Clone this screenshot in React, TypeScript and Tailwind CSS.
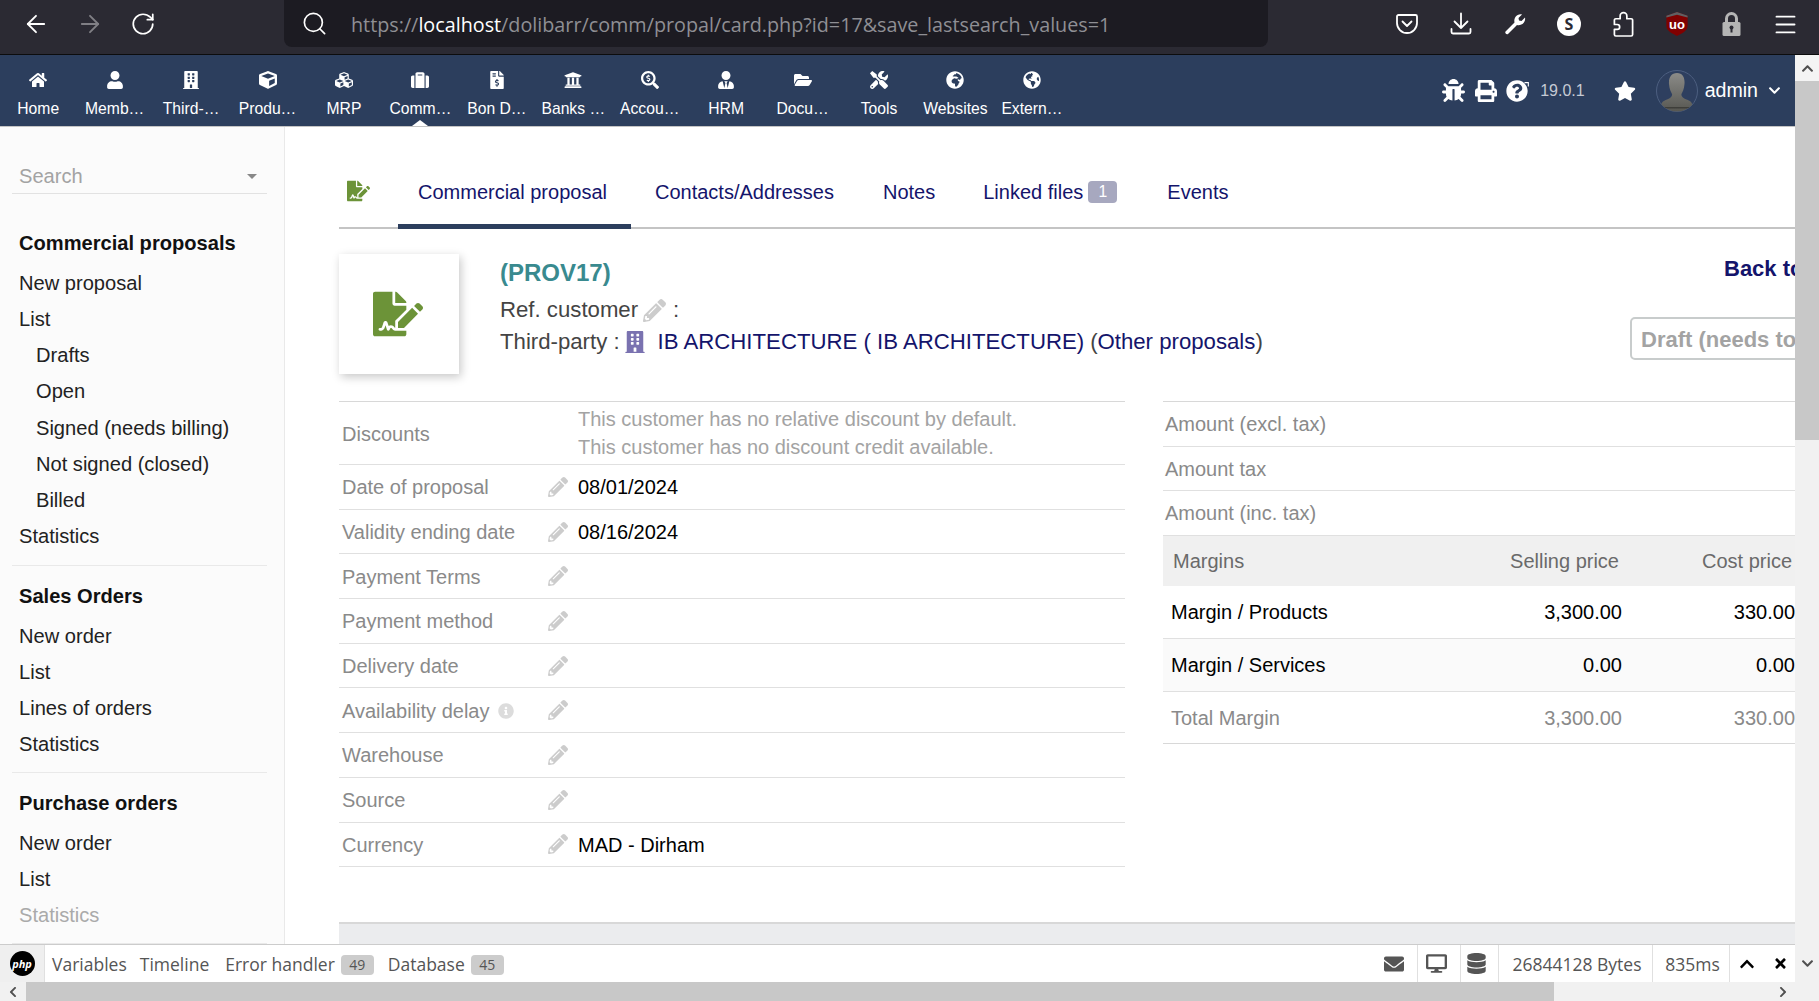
import { ArrowLeft, ArrowRight, RotateCw, Search, Menu } from "lucide-react";
import {
  FaBug,
  FaBuilding,
  FaChevronDown,
  FaChevronLeft,
  FaChevronRight,
  FaChevronUp,
  FaCube,
  FaCubes,
  FaDatabase,
  FaDesktop,
  FaEnvelope,
  FaFileInvoiceDollar,
  FaFileSignature,
  FaFolderOpen,
  FaGlobeAfrica,
  FaGlobeAmericas,
  FaHome,
  FaInfoCircle,
  FaPencilAlt,
  FaPrint,
  FaQuestionCircle,
  FaSearchDollar,
  FaStar,
  FaSuitcase,
  FaTimes,
  FaTools,
  FaUniversity,
  FaUser,
  FaUserTie,
} from "react-icons/fa";

const NAV = [
  { label: "Home", icon: FaHome },
  { label: "Memb…", icon: FaUser },
  { label: "Third-…", icon: FaBuilding },
  { label: "Produ…", icon: FaCube },
  { label: "MRP", icon: FaCubes },
  { label: "Comm…", icon: FaSuitcase, active: true },
  { label: "Bon D…", icon: FaFileInvoiceDollar },
  { label: "Banks …", icon: FaUniversity },
  { label: "Accou…", icon: FaSearchDollar },
  { label: "HRM", icon: FaUserTie },
  { label: "Docu…", icon: FaFolderOpen },
  { label: "Tools", icon: FaTools },
  { label: "Websites", icon: FaGlobeAfrica },
  { label: "Extern…", icon: FaGlobeAmericas },
];

const MENU = [
  {
    title: "Commercial proposals",
    items: [
      { label: "New proposal" },
      { label: "List" },
      { label: "Drafts", sub: true },
      { label: "Open", sub: true },
      { label: "Signed (needs billing)", sub: true },
      { label: "Not signed (closed)", sub: true },
      { label: "Billed", sub: true },
      { label: "Statistics" },
    ],
  },
  {
    title: "Sales Orders",
    items: [{ label: "New order" }, { label: "List" }, { label: "Lines of orders" }, { label: "Statistics" }],
  },
  {
    title: "Purchase orders",
    items: [{ label: "New order" }, { label: "List" }, { label: "Statistics", muted: true }],
  },
];

const FIELDS = [
  { label: "Date of proposal", value: "08/01/2024" },
  { label: "Validity ending date", value: "08/16/2024" },
  { label: "Payment Terms" },
  { label: "Payment method" },
  { label: "Delivery date" },
  { label: "Availability delay", info: true },
  { label: "Warehouse" },
  { label: "Source" },
  { label: "Currency", value: "MAD - Dirham" },
];

function PocketIcon() {
  return (
    <svg viewBox="0 0 24 24" className="size-[24px]" fill="none" stroke="white" strokeWidth="1.8">
      <path d="M3.5 3h17a1.5 1.5 0 0 1 1.5 1.5V11c0 5.5-4.5 10-10 10S2 16.5 2 11V4.5A1.5 1.5 0 0 1 3.5 3z" />
      <path d="M7.5 9.5 12 14l4.5-4.5" strokeLinecap="round" strokeLinejoin="round" />
    </svg>
  );
}

function DownloadIcon() {
  return (
    <svg viewBox="0 0 24 24" className="size-[24px]" fill="none" stroke="white" strokeWidth="1.8" strokeLinecap="round" strokeLinejoin="round">
      <path d="M12 1.5v14.5M5.5 9.5 12 16l6.5-6.5" />
      <path d="M2.5 17v3a1.5 1.5 0 0 0 1.5 1.5h16a1.5 1.5 0 0 0 1.5-1.5v-3" />
    </svg>
  );
}

function WrenchIcon() {
  return (
    <svg viewBox="0 0 24 24" className="size-[24px]" fill="white">
      <path d="M2.5 19.5 11.5 10.5C10.5 6 14 1.5 19 2.5L15.5 6 16 8.5 18.5 9 22 5.5C23 10.5 18.5 14 14 13L5 22C3.5 23 1.5 21 2.5 19.5Z" />
    </svg>
  );
}

function PuzzleIcon() {
  return (
    <svg viewBox="0 0 24 28" className="h-[27px] w-[23px]" fill="none" stroke="white" strokeWidth="1.8" strokeLinejoin="round">
      <path d="M4 26h16a1.5 1.5 0 0 0 1.5-1.5V9.5A1.5 1.5 0 0 0 20 8h-4.5V5a3.5 3.5 0 0 0-7 0v3H4a1.5 1.5 0 0 0-1.5 1.5V14h3a2.5 2.5 0 0 1 0 5h-3v5.5A1.5 1.5 0 0 0 4 26z" />
    </svg>
  );
}

function LockIcon() {
  return (
    <svg viewBox="0 0 19 24" className="h-[24px] w-[19px]">
      <path d="M4.5 11V6.5a5 5 0 0 1 10 0V11" fill="none" stroke="#b5b5b5" strokeWidth="3" />
      <rect x="0.5" y="10" width="18" height="14" rx="1.5" fill="#b5b5b5" />
      <circle cx="9.5" cy="15.5" r="2" fill="#2b2a33" />
      <rect x="8.5" y="16" width="2" height="4.5" fill="#2b2a33" />
    </svg>
  );
}

function UblockIcon() {
  return (
    <span className="relative flex h-[24px] w-[22px] items-center justify-center">
      <svg viewBox="0 0 23 26" className="absolute inset-0 size-full">
        <path d="M11.5 0 23 4v11c0 5-5 8-11.5 11C5 23 0 20 0 15V4z" fill="#800000" />
        <path d="M11.5 0 23 4v2L11.5 3 0 6V4z" fill="#5f6063" />
      </svg>
      <span className="relative text-[13px] leading-none font-bold text-white">uo</span>
    </span>
  );
}

function Avatar() {
  return (
    <svg viewBox="0 0 42 42" className="size-[42px] shrink-0">
      <defs>
        <linearGradient id="bust" x1="0" y1="0" x2="0" y2="1">
          <stop offset="0" stopColor="#8b8b88" />
          <stop offset="1" stopColor="#565650" />
        </linearGradient>
        <clipPath id="round">
          <circle cx="21" cy="21" r="20.5" />
        </clipPath>
      </defs>
      <circle cx="21" cy="21" r="20.5" fill="#2e3f5f" stroke="#4d5f80" />
      <g clipPath="url(#round)">
        <path d="M21 3c6 0 8 5 7.5 11-.4 5-2 8-3 10-.5 2 1 4 5 5.5 4 1.5 6 3 6 7v6H5v-6c0-4 2-5.5 6-7 4-1.5 5.5-3.5 5-5.5-1-2-2.6-5-3-10C12.5 8 15 3 21 3z" fill="url(#bust)" />
        <rect x="5" y="37" width="32" height="1.5" fill="#3e3e3a" />
      </g>
    </svg>
  );
}

function Toolbar() {
  return (
    <div className="flex h-[55px] shrink-0 border-b border-[#0c0c0d] bg-[#2b2a33]">
      <div className="flex h-[48px] w-[284px] shrink-0 items-center gap-[26px] pl-[22px] text-white">
        <ArrowLeft size={28} strokeWidth={1.6} />
        <ArrowRight size={28} strokeWidth={1.6} className="opacity-40" />
        <RotateCw size={26} strokeWidth={1.6} />
      </div>
      <div className="flex h-[47px] w-[984px] shrink-0 items-center gap-[23px] rounded-b-lg bg-[#1c1b22] pl-[17px] font-[Open_Sans,sans-serif] text-[19.75px] whitespace-nowrap text-[#8f8f94]">
        <Search size={27} strokeWidth={1.5} className="text-white" />
        <span className="pt-[2px]">
          https://<span className="text-white">localhost</span>/dolibarr/comm/propal/card.php?id=17&amp;save_lastsearch_values=1
        </span>
      </div>
      <div className="ml-auto flex h-[48px] items-center pr-[7px] text-white">
        <div className="flex w-[54px] justify-center"><PocketIcon /></div>
        <div className="flex w-[54px] justify-center"><DownloadIcon /></div>
        <div className="flex w-[54px] justify-center"><WrenchIcon /></div>
        <div className="flex w-[54px] justify-center">
          <span className="flex size-[24px] items-center justify-center rounded-full bg-white font-[Open_Sans,sans-serif] text-[16px] font-bold text-[#2b2a33]">S</span>
        </div>
        <div className="flex w-[54px] justify-center"><PuzzleIcon /></div>
        <div className="flex w-[54px] justify-center"><UblockIcon /></div>
        <div className="flex w-[54px] justify-center"><LockIcon /></div>
        <div className="flex w-[54px] justify-center"><Menu size={27} strokeWidth={1.7} /></div>
      </div>
    </div>
  );
}

function TopNav() {
  return (
    <div className="flex h-[72px] shrink-0 border-b border-[#c4c4c4] bg-[#2c3e5d] text-white">
      {NAV.map(({ label, icon: Icon, active }) => (
        <div key={label} className="relative flex w-[76.45px] shrink-0 flex-col items-center pt-[16px]">
          <Icon size={18} />
          <span className="mt-[10px] text-[15.7px] leading-[20px] whitespace-nowrap">{label}</span>
          {active && (
            <span className="absolute bottom-0 left-1/2 h-0 w-0 -translate-x-1/2 border-x-[8px] border-b-[6px] border-x-transparent border-b-white" />
          )}
        </div>
      ))}
      <div className="ml-auto flex items-center pr-[14px]">
        <FaBug size={23} />
        <FaPrint size={22} className="ml-[10px]" />
        <span className="relative ml-[9px] flex w-[25px]">
          <FaQuestionCircle size={22} />
          <FaChevronUp size={7} className="absolute top-0 right-0 rotate-45" />
        </span>
        <span className="ml-[9px] text-[16px] text-[#c5cad4]">19.0.1</span>
        <FaStar size={22} className="ml-[29px]" />
        <span className="ml-[20px]"><Avatar /></span>
        <span className="ml-[7px] text-[19.6px]">admin</span>
        <FaChevronDown size={13} className="ml-[10px]" />
      </div>
    </div>
  );
}

function Sidebar() {
  return (
    <aside className="w-[285px] shrink-0 overflow-hidden border-r border-[#e9e9e9] bg-[#fbfbfb] pt-[31px] pr-[17px] pl-[12px] text-[20.1px] text-[#222]">
      <div className="flex h-[36px] items-center justify-between border-b border-[#e2e2e2] pt-[2px] pr-[10px] pl-[7px] text-[#a3a3a3]">
        <span>Search</span>
        <span className="h-0 w-0 border-x-[5px] border-t-[5px] border-x-transparent border-t-[#888]" />
      </div>
      {MENU.map((group, i) => (
        <div key={group.title} className={i === 0 ? "border-b border-[#e9e9e9] pt-[31px] pb-[11px]" : "border-b border-[#e9e9e9] pt-[12px] pb-[10px]"}>
          <div className="mb-[3px] flex h-[36px] items-center pt-[1px] pl-[7px] font-bold text-[#111]">{group.title}</div>
          {group.items.map((item) => (
            <div
              key={item.label}
              className={`flex h-[36.25px] items-center pt-[1px] whitespace-nowrap ${item.sub ? "pl-[24px]" : "pl-[7px]"} ${item.muted ? "text-[#aaaaaa]" : ""}`}
            >
              {item.label}
            </div>
          ))}
        </div>
      ))}
    </aside>
  );
}

function Tabs() {
  return (
    <div className="mt-[28px] flex h-[74px] shrink-0 border-b-2 border-[#c4c4c4] text-[#14146b]">
      <FaFileSignature size={22} className="mt-[25px] ml-[8px] w-[23px] text-[#6c9338]" />
      <div className="ml-[28px] flex h-[74px] w-[233px] items-center border-b-[5px] border-[#2c3e5d] pt-[4px] pl-[20px]">Commercial proposal</div>
      <div className="ml-[24px] flex items-center pt-[2px]">Contacts/Addresses</div>
      <div className="ml-[49px] flex items-center pt-[2px]">Notes</div>
      <div className="ml-[48px] flex items-center gap-[5px] pt-[2px]">
        Linked files
        <span className="flex h-[22px] w-[29px] items-center justify-center rounded-[4px] bg-[#a7a8bf] text-[15.7px] text-white">1</span>
      </div>
      <div className="ml-[50px] flex items-center pt-[2px]">Events</div>
    </div>
  );
}

function Header() {
  return (
    <div className="mt-[25px] flex shrink-0">
      <div className="flex h-[120px] w-[120px] shrink-0 items-center justify-center bg-white text-[#6c9338] shadow-[2px_3px_9px_rgba(0,0,0,0.22)]">
        <FaFileSignature size={50} className="ml-[-2px]" />
      </div>
      <div className="ml-[41px] min-w-0 flex-1 text-[22.2px] whitespace-nowrap text-[#444]">
        <div className="pt-[4px] text-[24px] leading-[30px] font-bold text-[#398a8f]">(PROV17)</div>
        <div className="mt-[6px] flex h-[32px] items-center">
          Ref. customer
          <FaPencilAlt size={23} className="mr-[7px] ml-[5px] text-[#cccccc]" />
          :
        </div>
        <div className="flex h-[32px] items-center">
          Third-party :
          <FaBuilding size={22} className="mr-[12px] ml-[4px] text-[#7a72b0]" />
          <span className="text-[#14146b]">IB ARCHITECTURE ( IB ARCHITECTURE)</span>
          <span className="ml-[6px]">(<span className="text-[#14146b]">Other proposals</span>)</span>
        </div>
      </div>
      <div className="w-[165px] shrink-0 overflow-hidden text-[22px] whitespace-nowrap">
        <div className="mt-[4px] ml-[94px] leading-[22px] font-bold text-[#14146b]">Back to list</div>
        <div className="mt-[37px] flex h-[43px] w-[320px] items-center rounded-[5px] border-2 border-[#c8cccc] pt-[1px] pl-[9px] font-bold text-[#a3a3a3]">
          Draft (needs to be validated)
        </div>
      </div>
    </div>
  );
}

function LeftTable() {
  return (
    <div className="w-[786px] shrink-0 border-t border-[#d8d8d8]">
      <div className="grid h-[63px] grid-cols-[239px_1fr] items-center border-b border-[#e0e0e0]">
        <span className="pt-[1px] pl-[3px] text-[#8a8a8a]">Discounts</span>
        <div className="leading-[28px] whitespace-nowrap text-[#a3a3a3]">
          <div>This customer has no relative discount by default.</div>
          <div>This customer has no discount credit available.</div>
        </div>
      </div>
      {FIELDS.map((f) => (
        <div key={f.label} className="grid h-[44.7px] grid-cols-[209px_30px_1fr] items-center border-b border-[#e0e0e0]">
          <span className="flex items-center gap-[8px] pt-[1px] pl-[3px] text-[#8a8a8a]">
            {f.label}
            {f.info && <FaInfoCircle size={16} className="text-[#dcdcdc]" />}
          </span>
          <FaPencilAlt size={20} className="text-[#cccccc]" />
          <span className="pt-[1px] text-black">{f.value}</span>
        </div>
      ))}
    </div>
  );
}

function RightTable() {
  return (
    <div className="min-w-0 flex-1 whitespace-nowrap">
      <div className="border-t border-[#d8d8d8]">
        {["Amount (excl. tax)", "Amount tax", "Amount (inc. tax)"].map((t) => (
          <div key={t} className="flex h-[44.6px] items-center border-b border-[#e0e0e0] pt-[1px] pl-[2px] text-[#8a8a8a]">{t}</div>
        ))}
      </div>
      <div className="flex h-[50px] items-center bg-[#f0f0f0] pt-[1px] pr-[3px] pl-[10px] text-[#6a6a6a]">
        <span className="flex-1">Margins</span>
        <span className="w-[173px] text-right">Selling price</span>
        <span className="w-[173px] text-right">Cost price</span>
      </div>
      <div className="flex h-[53px] items-center border-b border-[#e0e0e0] pt-[1px] pl-[8px] text-black">
        <span className="flex-1">Margin / Products</span>
        <span className="w-[173px] text-right">3,300.00</span>
        <span className="w-[173px] text-right">330.00</span>
      </div>
      <div className="flex h-[53px] items-center border-b border-[#e0e0e0] bg-[#fafafa] pt-[1px] pl-[8px] text-black">
        <span className="flex-1">Margin / Services</span>
        <span className="w-[173px] text-right">0.00</span>
        <span className="w-[173px] text-right">0.00</span>
      </div>
      <div className="flex h-[52px] items-center border-b border-[#d8d8d8] pt-[2px] pl-[8px] text-[#8a8a8a]">
        <span className="flex-1">Total Margin</span>
        <span className="w-[173px] text-right">3,300.00</span>
        <span className="w-[173px] text-right">330.00</span>
      </div>
    </div>
  );
}

function DebugBar() {
  const tab = "pt-[2px] text-[#555]";
  const badge = "ml-[6px] flex h-[20px] w-[33px] items-center justify-center rounded-[4px] bg-[#cccccc] text-[14px] text-[#555]";
  const cell = "flex h-full items-center justify-center border-l border-[#e0e0e0]";
  return (
    <div className="flex h-[38px] shrink-0 items-stretch border-t border-[#cccccc] bg-white font-[Open_Sans,sans-serif] text-[17.5px] whitespace-nowrap">
      <div className="flex w-[45px] shrink-0 items-center justify-center border-r border-[#e0e0e0] bg-[#efefef]">
        <span className="flex h-[25px] w-[25px] items-center justify-center rounded-full bg-black text-[11px] leading-none font-bold text-white italic">php</span>
      </div>
      <div className={`ml-[7px] flex items-center ${tab}`}>Variables</div>
      <div className={`ml-[13px] flex items-center ${tab}`}>Timeline</div>
      <div className={`ml-[16px] flex items-center ${tab}`}>
        Error handler<span className={badge}>49</span>
      </div>
      <div className={`ml-[14px] flex items-center ${tab}`}>
        Database<span className={badge}>45</span>
      </div>
      <div className="ml-auto flex items-stretch text-[#555]">
        <div className="flex w-[33px] items-center justify-center pr-[13px]"><FaEnvelope size={20} /></div>
        <div className={`${cell} w-[43px] pr-[5px]`}><FaDesktop size={21} /></div>
        <div className={`${cell} w-[38px] pr-[6px]`}><FaDatabase size={21} /></div>
        <div className={`${cell} w-[154px] pt-[2px] pl-[3px]`}>26844128 Bytes</div>
        <div className={`${cell} w-[77px] pt-[2px] pl-[3px]`}>835ms</div>
        <div className={`${cell} w-[66px] gap-[18px] pr-[3px] pl-[5px] text-black`}>
          <FaChevronUp size={16} />
          <FaTimes size={15} />
        </div>
      </div>
    </div>
  );
}

function ScrollBarV() {
  return (
    <div className="flex w-[24px] shrink-0 flex-col bg-[#f1f1f1] text-[#505050]">
      <div className="flex h-[26px] shrink-0 items-center justify-center bg-[#f4f4f4]"><FaChevronUp size={13} /></div>
      <div className="h-[359px] shrink-0 bg-[#c8c8c8]" />
      <div className="mt-auto flex h-[33px] items-start justify-center pt-[8px]"><FaChevronDown size={13} /></div>
    </div>
  );
}

function ScrollBarH() {
  return (
    <div className="flex h-[19px] shrink-0 items-center bg-[#f1f1f1] text-[#505050]">
      <div className="flex w-[26px] shrink-0 justify-center"><FaChevronLeft size={12} /></div>
      <div className="h-full w-[1528px] shrink-0 bg-[#c8c8c8]" />
      <FaChevronRight size={12} className="mr-[30px] ml-auto" />
    </div>
  );
}

export default function App() {
  return (
    <div className="flex h-screen w-full flex-col overflow-hidden bg-white font-[Liberation_Sans,Arial,sans-serif] text-[20px]">
      <Toolbar />
      <div className="flex min-h-0 flex-1">
        <div className="flex min-w-0 flex-1 flex-col">
          <TopNav />
          <div className="flex min-h-0 flex-1">
            <Sidebar />
            <main className="flex min-w-0 flex-1 flex-col overflow-hidden pl-[54px]">
              <Tabs />
              <Header />
              <div className="mt-[27px] flex shrink-0 gap-[38px]">
                <LeftTable />
                <RightTable />
              </div>
              <div className="mt-[55px] min-h-[40px] shrink-0 border-t-2 border-[#d8d8d8] bg-[#ebecee]" />
            </main>
          </div>
          <DebugBar />
        </div>
        <ScrollBarV />
      </div>
      <ScrollBarH />
    </div>
  );
}
